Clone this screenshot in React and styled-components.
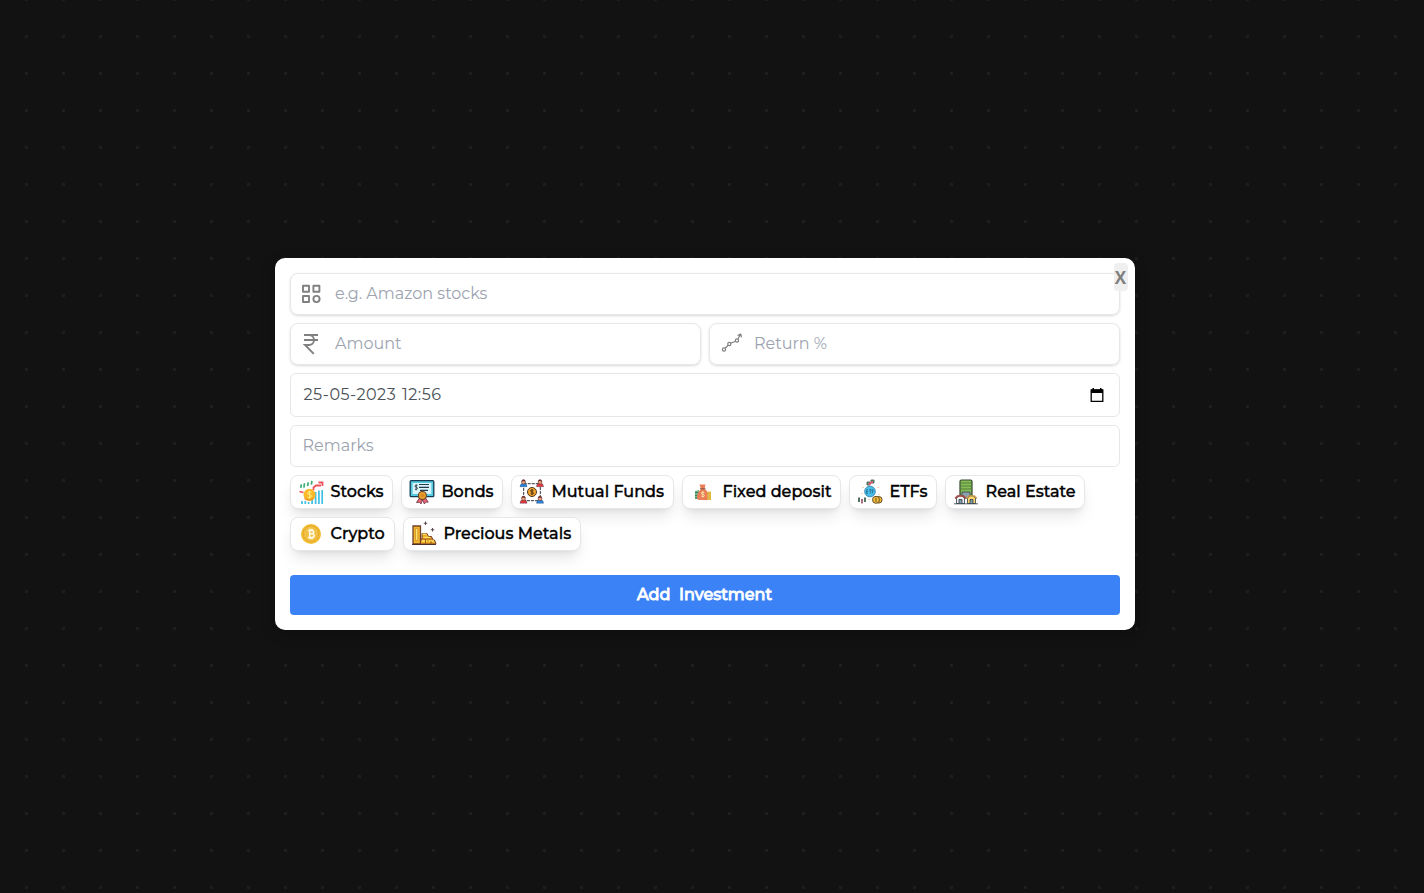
import React from "react";
import styled, { createGlobalStyle } from "styled-components";

const Global = createGlobalStyle`
  *, *::before, *::after { box-sizing: border-box; }
  body {
    margin: 0;
    background-color: #121212;
    font-family: Montserrat, Inter, sans-serif;
  }
`;

const Page = styled.main`
  display: flex;
  justify-content: center;
  align-items: center;
  width: 100%;
  height: 893px;
  padding: 0 15px 5px 0;
  background: conic-gradient(from 90deg at 34px 34px, #1e1e1e 25%, #121212 0) -9px 1px / 37px 37px;
`;

const Dialog = styled.form`
  position: relative;
  display: flex;
  flex-direction: column;
  width: 860px;
  height: 372px;
  margin: 0;
  padding: 15px;
  background: #fff;
  border-radius: 10px;
  box-shadow: 0 4px 14px rgba(0, 0, 0, 0.25);
`;

const Close = styled.button`
  position: absolute;
  top: 5px;
  right: 7px;
  width: 14px;
  height: 28px;
  padding: 0;
  border: 0;
  border-radius: 4px;
  background: #efefef;
  color: #808080;
  font: 700 17px/29px "Open Sans", sans-serif;
  display: flex;
  justify-content: center;
`;

const Row = styled.div`
  display: flex;
  gap: 8px;
  margin-bottom: 8px;
`;

const Field = styled.label`
  flex: 1;
  display: flex;
  align-items: center;
  height: ${(p) => p.$height || 42}px;
  padding: 0 ${(p) => (p.$icon ? 10 : 13)}px 0 ${(p) => (p.$icon ? 10 : 12)}px;
  border: 1px solid #e5e7eb;
  border-radius: ${(p) => (p.$icon ? 8 : 6)}px;
  box-shadow: ${(p) => (p.$icon ? "0 1px 3px rgba(0,0,0,.1), 0 1px 2px rgba(0,0,0,.06)" : "none")};
  color: ${(p) => (p.$filled ? "#4b5157" : "#9ca3af")};
`;

const FieldIcon = styled.svg`
  flex: none;
  width: 22px;
  height: 22px;
  margin-right: 12.5px;
  fill: none;
  stroke: #808080;
`;

const Text = styled.span`
  flex: 1;
  font-size: 16px;
  font-weight: 400;
  line-height: 24px;
  white-space: nowrap;
`;

const DateText = styled(Text)`
  padding-left: 1px;
  letter-spacing: 0.5px;
  word-spacing: 1px;
`;

const Calendar = styled.svg`
  width: 14px;
  height: 16px;
  margin: 0 2px 1px 0;
`;

const Chips = styled.div`
  display: flex;
  flex-wrap: wrap;
  gap: 8px;
`;

const Chip = styled.button`
  display: flex;
  align-items: center;
  width: ${(p) => p.$width}px;
  height: 34px;
  padding: 0 0 0 7px;
  border: 1px solid #e5e7eb;
  border-radius: 8px;
  background: #fff;
  color: #000;
  box-shadow: 0 10px 15px -3px rgba(0, 0, 0, 0.1), 0 4px 6px -4px rgba(0, 0, 0, 0.1);
  font-family: inherit;
  font-size: 16px;
  font-weight: 500;
  line-height: 24px;
  -webkit-text-stroke: 0.35px currentColor;
  white-space: nowrap;
`;

const ChipIcon = styled.svg`
  flex: none;
  width: 26px;
  height: 26px;
  margin: 0 7px 0 0;
`;

const Submit = styled.button`
  height: 40px;
  margin-top: auto;
  padding: 0 0 1px;
  border: 0;
  border-radius: 4px;
  background: #3b82f6;
  color: #fff;
  font-family: inherit;
  font-size: 16px;
  font-weight: 500;
  -webkit-text-stroke: 0.8px currentColor;
  white-space: pre;
`;

const dark = "#303c48";

const Stocks = () => (
  <>
    <path d="M3 9.5V6m3 3V4.5M9.5 7V3M13 5V1" stroke="#3aae72" strokeWidth="1.7" transform="rotate(8 8 8)" />
    <path d="M1.5 12.5l4 1M15.500 11V8.500l2.500-2h5M20.500 3.500h4V7" fill="none" stroke="#f0525a" strokeWidth="1.8" />
    <path d="M4 25v-3m3.3 3v-3m3.3 3v-2m3.5 2v-4m3.5 4V13m3.3 12V11.5M24.200 25V11" stroke="#3fc0e4" strokeWidth="1.7" />
    <circle cx="11.5" cy="15.7" r="6" fill="#f9b928" />
    <path d="M6.5 19.5q5 3.5 9.500-.5" fill="none" stroke="#ea9225" strokeWidth="1.4" />
    <path d="M13.5 13.3q-4-1.500-4 .7c0 2 4 1 4 3s-3 2-4 .8M11.500 11.600v8" fill="none" stroke="#ffed80" />
  </>
);
const Bonds = () => (
  <>
    <rect x="1.2" y="1.7" width="23.6" height="16" rx="1" fill="#55cbe2" stroke="#173b50" strokeWidth="1.3" />
    <rect x="3.7" y="4" width="18.6" height="11" fill="#d9f4fc" />
    <path d="M10 5.500h10M10 8.300h10m-9 3h8" stroke="#263b4d" strokeWidth="1.2" />
    <path d="M8.500 6.300H7q-1 0-1 1c0 1 2.500.5 2.500 2 0 1-1 1-2.500 1M7.200 5.300v6" fill="none" stroke={dark} strokeWidth=".9" />
    <path d="M11 18l-3.500 5.500 3-.2L12 25l1.400-4 2 4 1-2 2.800.2L16 18" fill="#ee6977" stroke="#682b40" strokeWidth=".8" />
    <circle cx="13.4" cy="16.5" r="4" fill="#e9a12e" stroke="#634321" strokeWidth="1.1" />
    <circle cx="13.4" cy="16.5" r="1.7" fill="#d88625" />
  </>
);
const Person = ({ x, y, color }) => (
  <g transform={`translate(${x} ${y})`}>
    <path d="M-3.500 7.200q0-3.500 3.500-3.500t3.500 3.500z" fill={color} stroke="#273a58" strokeWidth=".4" />
    <circle cy="2.7" r="1.9" fill="#eca17c" stroke="#5c302b" strokeWidth=".6" />
    <path d="M-2.100 2.300q0-2.600 2.100-2.600t2.100 2.600Q0 .6-2.100 2.300" fill="#692f2d" />
  </g>
);
const MutualFunds = () => (
  <>
    <rect x="4.7" y="4.7" width="16.6" height="17" fill="none" stroke="#30333b" strokeDasharray="3 1" />
    <Person x={4.5} y={0.5} color="#2588e5" />
    <Person x={21} y={0.5} color="#ed3438" />
    <Person x={4.5} y={17} color="#ed3438" />
    <Person x={21} y={17} color="#2588e5" />
    <circle cx="13" cy="13" r="4.5" fill="#f4a52c" stroke="#51351e" />
    <path d="M14.500 11.300q-3-1-3 .7c0 1.400 3 .6 3 2.100s-2 1.200-3 .6M13 10v6" fill="none" stroke="#51351e" />
  </>
);
const FixedDeposit = () => (
  <>
    <path d="M5 12l4-1v9H5z" fill="#72b785" />
    <path d="M5 13.500h4m-4 3h4m-4 2.500h4" stroke="#407b5c" />
    <path d="M9.500 5.500h6L14.500 10q4.500 3 4.500 7.500t-4 3.500H9.500q-3 0-2.500-4t4-7z" fill="#e97e59" />
    <path d="M10 9.800h5.500" stroke="#815342" />
    <path d="M14.300 13.500q-3-1-3 .7c0 1.400 3 .8 3 2.300s-2 1.300-3 .5M12.800 12v6.500" fill="none" stroke="#fff1ae" strokeWidth=".8" />
    <path d="M17.500 12.500H21V21h-3.500z" fill="#f3ca49" />
    <path d="M17.500 14H21m-3.500 2H21m-3.500 2H21m-3.500 2H21" stroke="#bd923c" strokeWidth=".7" />
  </>
);
const ETFs = () => (
  <>
    <circle cx="13" cy="12.5" r="5.4" fill="#48bee9" stroke="#27789b" strokeWidth=".7" />
    <path d="M11 10.800H9.600v3.500H11M9.600 12.500H11m1-1.700h2.600m-1.300 0v3.600m3.500-3.600h-1.500v3.600m0-1.800h1.300" fill="none" stroke="#205878" strokeWidth=".65" />
    <path d="M10 6V3h3v3zm4-2V1h3v3z" fill="#5fb477" stroke="#273839" strokeWidth=".7" />
    <path d="M11.500 5.500q2.500-2.500 4.500-2.500" stroke="#e95772" strokeWidth="1.8" />
    <path d="M2 18.500V23m6-4.500V23" stroke="#385947" strokeWidth="1.7" />
    <path d="M5 20v4.500" stroke="#8e4253" strokeWidth="1.5" />
    <circle cx="21.8" cy="20.8" r="3.3" fill="#f4bc36" stroke="#65502a" />
    <circle cx="19" cy="20.8" r="3.5" fill="#f4bc36" stroke="#65502a" />
    <path d="M19 18.800v4" stroke="#65502a" />
    <path d="M6 8v1m15-1v1m-9 11v1M5 14v1m17 0v1" stroke="#f4ac66" />
  </>
);
const RealEstate = () => (
  <>
    <path d="M7 2.500Q7 1 8.500 1h9Q19 1 19 2.500V17H7z" fill="#86bd58" stroke="#32452d" strokeWidth="1.2" />
    <path d="M8 4h10M8 7h10M8 10h10" stroke="#527f39" />
    <path d="M9 13h8v6H9z" fill="#8aa2ad" stroke="#33434e" strokeWidth=".8" />
    <path d="M3.500 19l4-3 4 3v5.500h-8z" fill="#eceef0" stroke={dark} strokeWidth=".8" />
    <path d="M14.500 19l4-3 4 3v5.500h-8z" fill="#ffd76b" stroke={dark} strokeWidth=".8" />
    <path d="M2.200 19.500L4.500 17h6l2.200 2.500" fill="none" stroke="#a9443f" strokeWidth="1.6" />
    <path d="M13.500 19.500l2.200-2.500h5.600l2.500 2.500" fill="none" stroke="#c89a4c" strokeWidth="1.5" />
    <path d="M6 24.500v-4h3v4m8 0v-4h3v4M1 24.800h24" fill="#819cab" stroke={dark} strokeWidth=".8" />
  </>
);
const Crypto = () => (
  <>
    <circle cx="13" cy="13" r="10" fill="#f2bd33" />
    <circle cx="13" cy="12.7" r="7.8" fill="#f0c144" stroke="#e2a126" strokeWidth=".8" />
    <path d="M10 9.500h3.700q2 0 2 1.600t-2 1.700h-2m2 0q2.500.1 2.500 1.900t-2.500 1.800H10m1.700-7v7m.3-8.800v1.800m2-1.800v1.800m-2 7v1.800m2-1.800v1.800" fill="none" stroke="#fffbea" strokeWidth="1.5" />
  </>
);
const Metals = () => (
  <>
    <path d="M2 5h7.500v18H2z" fill="#f5b52b" stroke="#70412b" strokeWidth="1.3" />
    <path d="M4.500 7.500h2.300v12H4.500z" fill="#ffe36a" stroke="#bd7c29" strokeWidth=".6" />
    <path d="M9.500 23v-3l1.500-3v-4.500h5l1.500 3h3L22 19h1.500l1.500 4z" fill="#edaa27" stroke="#763f29" />
    <path d="M11.500 13.200h4M12.500 16.500H19M11 20h5m2 0h5" stroke="#ffe35b" strokeWidth="1.5" />
    <path d="M11 18h10m-6.500 0v5m5.500-3v3" stroke="#995321" strokeWidth=".9" />
    <path d="M14.500.5V4m-1.750-1.750h3.500M21.500 7v3.500m-1.750-1.750h3.500" stroke="#594754" />
    <path d="M1 23.500h24" stroke="#51302a" />
  </>
);

const categories = [
  { label: "Stocks", width: 103, Art: Stocks },
  { label: "Bonds", width: 102, Art: Bonds },
  { label: "Mutual Funds", width: 163, Art: MutualFunds },
  { label: "Fixed deposit", width: 159, Art: FixedDeposit },
  { label: "ETFs", width: 88, Art: ETFs },
  { label: "Real Estate", width: 140, Art: RealEstate },
  { label: "Crypto", width: 105, Art: Crypto },
  { label: "Precious Metals", width: 178, Art: Metals },
];

export default function App() {
  return (
    <>
      <Global />
      <Page>
        <Dialog>
          <Row>
            <Field $icon>
              <FieldIcon viewBox="0 0 22 22" strokeWidth="1.9">
                <path d="M2 2.700h6v6H2zM12.400 2.700h6v6h-6zM2 13h6v6H2z" strokeLinejoin="round" />
                <circle cx="15.5" cy="16" r="3.1" />
              </FieldIcon>
              <Text>e.g. Amazon stocks</Text>
            </Field>
          </Row>
          <Row>
            <Field $icon>
              <FieldIcon viewBox="0 0 22 22" strokeWidth="1.9">
                <path d="M3 2h14M3 7h14M3 2h5a5 5 0 0 1 0 10H4l8.800 8.800" />
              </FieldIcon>
              <Text>Amount</Text>
            </Field>
            <Field $icon>
              <FieldIcon viewBox="0 0 22 22" strokeWidth="1.2">
                <circle cx="4" cy="16.5" r="1.6" />
                <circle cx="9.3" cy="11" r="1.6" />
                <circle cx="17" cy="7.5" r="1.6" />
                <path d="M5.100 15.200l3.100-3M10.800 10.300l4.600-2M17.800 6L20.500 1.500M17.500 2.500l3.200-1.400.8 3.200" />
              </FieldIcon>
              <Text>Return %</Text>
            </Field>
          </Row>
          <Row>
            <Field $height={44} $filled>
              <DateText>25-05-2023 12:56</DateText>
              <Calendar viewBox="0 0 14 16">
                <path d="M1.200 3h11.600v11.300H1.200z" fill="none" stroke="#000" strokeWidth="1.3" />
                <path d="M1 2.500h12V6H1zM2.500 1H4v2H2.500zM10 1h1.500v2H10z" />
              </Calendar>
            </Field>
          </Row>
          <Row>
            <Field>
              <Text>Remarks</Text>
            </Field>
          </Row>
          <Chips>
            {categories.map(({ label, width, Art }) => (
              <Chip type="button" key={label} $width={width}>
                <ChipIcon viewBox="0 0 26 26"><Art /></ChipIcon>
                {label}
              </Chip>
            ))}
          </Chips>
          <Submit type="button">{"Add  Investment"}</Submit>
          <Close type="button">X</Close>
        </Dialog>
      </Page>
    </>
  );
}
